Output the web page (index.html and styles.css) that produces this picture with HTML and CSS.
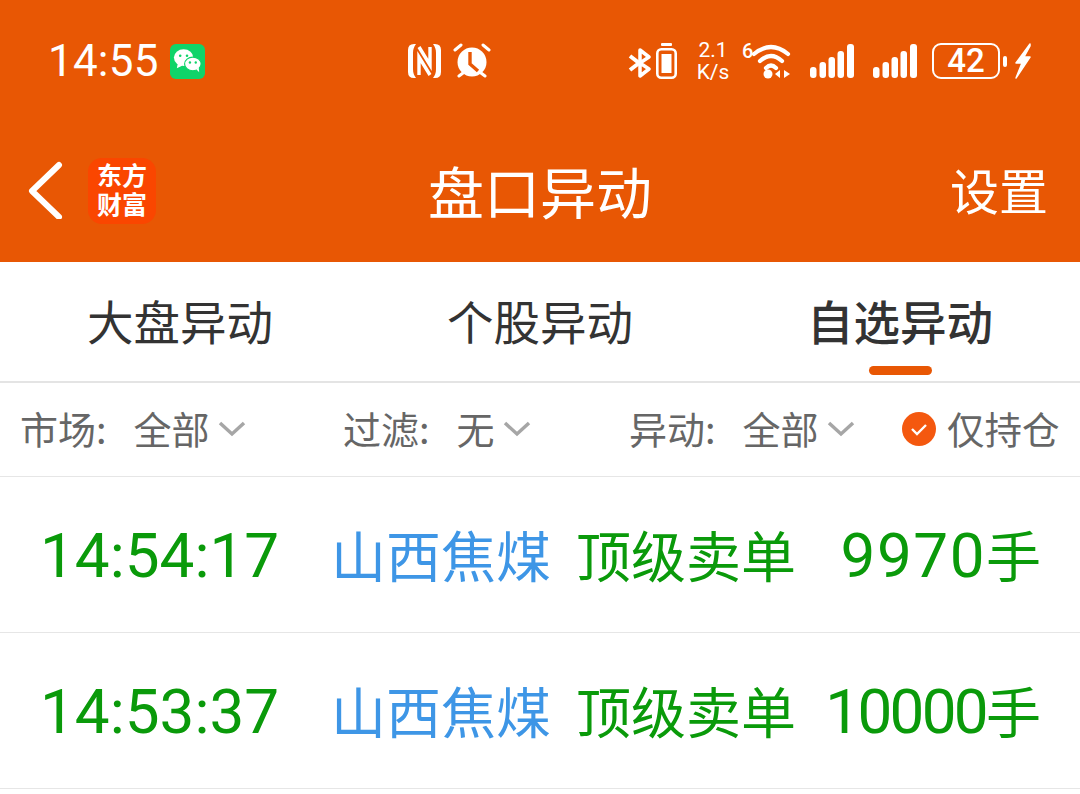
FILE: index.html
```html
<!DOCTYPE html>
<html lang="zh-CN">
<head>
<meta charset="utf-8">
<title>盘口异动</title>
<link rel="stylesheet" href="styles.css">
</head>
<body>
<div class="page">
  <header class="top">
    <div class="status">
      <div class="status-left">
        <span class="clock">14:55</span>
        <svg class="wechat" viewBox="0 0 36 36"><rect width="36" height="36" rx="6" fill="#0fd469"/><ellipse cx="14" cy="14" rx="10" ry="8.500" fill="#fff"/><path d="M8 20l-1 5 6-3z" fill="#fff"/><ellipse cx="23.500" cy="20.500" rx="8.500" ry="7" fill="#fff" stroke="#0fd469" stroke-width="1.200"/><path d="M27 26l3 3-.5-5z" fill="#fff"/><circle cx="10.500" cy="12" r="1.300" fill="#0fd469"/><circle cx="17.500" cy="12" r="1.300" fill="#0fd469"/><circle cx="20.500" cy="19" r="1.200" fill="#0fd469"/><circle cx="26.500" cy="19" r="1.200" fill="#0fd469"/></svg>
      </div>
      <div class="status-mid">
        <svg class="ic-nfc" viewBox="0 0 33 34"><path d="M8 0H6Q0 0 0 6v22q0 6 6 6h2c-2-3-3-5-3-9V9c0-4 1-6 3-9zM25 0h2q6 0 6 6v22q0 6-6 6h-2c2-3 3-5 3-9V9c0-4-1-6-3-9z" fill="#fff"/><path d="M11 3L22 21V3M22 31L11 13V31" fill="none" stroke="#fff" stroke-width="3.400"/></svg>
        <svg class="ic-alarm" viewBox="0 0 38 36"><circle cx="19" cy="19" r="14.500" fill="#fff"/><path d="M17 9v12l8 7" fill="none" stroke="#e85704" stroke-width="3.400"/><path d="M2 7l6-5M36 7l-6-5M6 33l4-3M32 33l-4-3" stroke="#fff" stroke-width="3" stroke-linecap="round"/></svg>
      </div>
      <div class="status-right">
        <svg class="ic-bt" viewBox="0 0 24 30"><path d="M2 8l9 7-9 7" fill="none" stroke="#fff" stroke-width="4"/><path d="M12 2l9 7-9 6zM12 15l9 6-9 7z" fill="none" stroke="#fff" stroke-width="3.500" stroke-linejoin="round"/></svg>
        <svg class="ic-vibe" viewBox="0 0 21 36"><rect x="1.300" y="6.300" width="18.400" height="28.400" rx="4" fill="none" stroke="#fff" stroke-width="2.600"/><rect x="5.500" y="11" width="10" height="19" fill="#fff"/><rect x="5" y="0" width="11" height="3" rx="1" fill="#fff"/></svg>
        <div class="speed"><span>2.1</span><span>K/s</span></div>
        <div class="wifi">
          <span class="wifi-six">6</span>
          <svg class="ic-wifi" viewBox="0 0 40 36"><path d="M2 11Q19-3 36 11M8 18Q19 8 30 18M14 25Q19 20 24 25" fill="none" stroke="#fff" stroke-width="4.200" stroke-linecap="round"/><circle cx="16" cy="31" r="4.500" fill="#fff"/><path d="M23 31l5-4v8zM32 27l6 4-6 4z" fill="#fff"/></svg>
        </div>
        <svg class="ic-signal" viewBox="0 0 44 34"><rect x="0" y="23" width="6.500" height="11" rx="3" fill="#fff"/><rect x="9.500" y="18" width="6.500" height="16" rx="3" fill="#fff"/><rect x="18.500" y="13" width="6.500" height="21" rx="3" fill="#fff"/><rect x="27.500" y="7" width="6.500" height="27" rx="3" fill="#fff"/><rect x="37" y="0" width="7" height="34" rx="3" fill="#fff"/></svg>
        <svg class="ic-signal ic-signal-b" viewBox="0 0 44 34"><rect x="0" y="23" width="6.500" height="11" rx="3" fill="#fff"/><rect x="9.500" y="18" width="6.500" height="16" rx="3" fill="#fff"/><rect x="18.500" y="13" width="6.500" height="21" rx="3" fill="#fff"/><rect x="27.500" y="7" width="6.500" height="27" rx="3" fill="#fff"/><rect x="37" y="0" width="7" height="34" rx="3" fill="#fff"/></svg>
        <div class="battery"><span class="battery-body">42</span><span class="battery-cap"></span></div>
        <svg class="ic-bolt" viewBox="0 0 16 36"><path d="M15 1L1 20h6L1 35 15 14H9l6-11z" fill="#fff" stroke="#fff" stroke-width="1.500" stroke-linejoin="round"/></svg>
      </div>
    </div>
    <div class="nav">
      <svg class="back" viewBox="0 0 36 60"><path d="M32 6L5 32l27 26" fill="none" stroke="#fff" stroke-width="6" stroke-linecap="round" stroke-linejoin="round"/></svg>
      <div class="logo"><span>东方</span><span>财富</span></div>
      <h1 class="title">盘口异动</h1>
      <a class="settings">设置</a>
    </div>
  </header>

  <nav class="tabs">
    <div class="tab">大盘异动</div>
    <div class="tab">个股异动</div>
    <div class="tab tab-active">自选异动</div>
  </nav>

  <div class="filters">
    <div class="filter f1"><span>市场:</span><span class="val">全部</span><svg class="chev" viewBox="0 0 28 16"><path d="M2 2l12 11L26 2" fill="none" stroke="#a6a6a6" stroke-width="3.500"/></svg></div>
    <div class="filter f2"><span>过滤:</span><span class="val">无</span><svg class="chev" viewBox="0 0 28 16"><path d="M2 2l12 11L26 2" fill="none" stroke="#a6a6a6" stroke-width="3.500"/></svg></div>
    <div class="filter f3"><span>异动:</span><span class="val">全部</span><svg class="chev" viewBox="0 0 28 16"><path d="M2 2l12 11L26 2" fill="none" stroke="#a6a6a6" stroke-width="3.500"/></svg></div>
    <div class="filter f4"><svg class="check" viewBox="0 0 34 34"><circle cx="17" cy="17" r="17" fill="#f4580f"/><path d="M10 17l5 5 9-9" fill="none" stroke="#fff" stroke-width="2.400"/></svg><span class="only">仅持仓</span></div>
  </div>

  <div class="row">
    <span class="time">14:54:17</span>
    <span class="stock">山西焦煤</span>
    <span class="kind">顶级卖单</span>
    <span class="qty"><span class="num num-wide">9970</span>手</span>
  </div>
  <div class="row">
    <span class="time">14:53:37</span>
    <span class="stock">山西焦煤</span>
    <span class="kind">顶级卖单</span>
    <span class="qty"><span class="num num-tight">10000</span>手</span>
  </div>
</div>
</body>
</html>
```

FILE: styles.css
```css
* { box-sizing: border-box; }
html, body { margin: 0; padding: 0; background: #fff; }
body { font-family: "Roboto", "Noto Sans CJK SC", sans-serif; }
.page { width: 1080px; height: 794px; overflow: hidden; display: flex; flex-direction: column; }

.top { background: #e85704; height: 262px; color: #fff; display: flex; flex-direction: column; }
.status { height: 122px; display: flex; align-items: center; padding-left: 48px; }
.status-left { display: flex; align-items: center; gap: 11px; width: 360px; }
.clock { font-family: "Roboto", sans-serif; font-size: 44px; line-height: 44px; letter-spacing: 0.2px; }
.wechat { width: 35px; height: 35px; }
.status-mid { display: flex; align-items: center; gap: 12px; width: 220px; }
.ic-nfc { width: 33px; height: 34px; }
.ic-alarm { width: 38px; height: 36px; }
.status-right { display: flex; align-items: center; }
.ic-bt { width: 24px; height: 30px; margin-top: 4px; }
.ic-vibe { width: 21px; height: 36px; margin-left: 4px; }
.speed { display: flex; flex-direction: column; align-items: center; font-size: 21px; line-height: 22px; margin-left: 19px; width: 34px; flex: none; }
.wifi { display: flex; align-items: flex-start; margin-left: 12px; }
.wifi-six { font-size: 20px; line-height: 20px; font-weight: 500; width: 10px; margin-top: -2px; }
.ic-wifi { width: 40px; height: 36px; }
.ic-signal { width: 44px; height: 34px; margin-left: 18px; }
.ic-signal-b { margin-left: 19px; }
.battery { display: flex; align-items: center; margin-left: 15px; }
.battery-body { width: 68px; height: 36px; border: 2.500px solid #fff; border-radius: 9px; font-size: 33px; line-height: 31px; font-weight: 500; text-align: center; }
.battery-cap { width: 4px; height: 11px; background: #fff; border-radius: 2px; margin-left: 3px; }
.ic-bolt { width: 16px; height: 36px; margin-left: 8px; }

.nav { position: relative; height: 140px; display: flex; align-items: flex-start; padding-top: 24px; }
.back { width: 36px; height: 60px; margin: 13px 0 0 27px; flex: none; }
.logo { width: 68px; height: 66px; margin: 12px 0 0 25px; padding-bottom: 4px; background: #fa4600; border-radius: 14px; display: flex; flex-direction: column; align-items: center; justify-content: center; font-family: "Noto Sans CJK SC", sans-serif; font-size: 25px; line-height: 29px; font-weight: 700; flex: none; }
.title { position: absolute; left: 0; right: 0; top: 33px; margin: 0; text-align: center; font-family: "Noto Sans CJK SC", sans-serif; font-size: 56px; line-height: 70px; font-weight: 400; }
.settings { margin-left: auto; margin-right: 32px; margin-top: 8px; font-family: "Noto Sans CJK SC", sans-serif; font-size: 49px; line-height: 70px; }

.tabs { height: 121px; border-bottom: 2px solid #e4e4e4; display: flex; font-family: "Noto Sans CJK SC", sans-serif; font-size: 46.500px; color: #333; }
.tab { flex: 1; text-align: center; line-height: 115px; position: relative; }
.tab-active { font-weight: 500; }
.tab-active::after { content: ""; position: absolute; left: 50%; bottom: 6px; width: 63px; height: 9px; margin-left: -31px; background: #e85704; border-radius: 5px; }

.filters { height: 94px; border-bottom: 1px solid #e6e6e6; display: flex; align-items: center; font-family: "Noto Sans CJK SC", sans-serif; font-size: 38px; color: #666; position: relative; }
.filter { display: flex; align-items: center; position: absolute; top: -2px; height: 93px; }
.f1 { left: 20px; }
.f2 { left: 343px; }
.f3 { left: 629px; }
.f4 { left: 902px; }
.val { margin-left: 27px; }
.only { font-size: 37.500px; }
.chev { width: 28px; height: 16px; margin-left: 8px; margin-top: 2px; }
.check { width: 34px; height: 34px; margin-right: 11px; margin-top: 2px; }

.row { height: 156px; border-bottom: 1px solid #e6e6e6; flex: none; display: grid; grid-template-columns: 291px 245px 1fr auto; align-items: center; padding-left: 40px; padding-right: 39px; padding-bottom: 4px; font-family: "Noto Sans CJK SC", sans-serif; font-size: 55px; color: #0a9a0a; white-space: nowrap; }
.time { font-family: "Roboto", sans-serif; font-size: 62px; margin-top: 5px; }
.stock { color: #3e96e6; }
.qty { display: flex; align-items: baseline; }
.num { font-family: "Roboto", sans-serif; font-size: 62px; }
.num-wide { letter-spacing: 1.500px; }
.num-tight { letter-spacing: -2.700px; }
```
